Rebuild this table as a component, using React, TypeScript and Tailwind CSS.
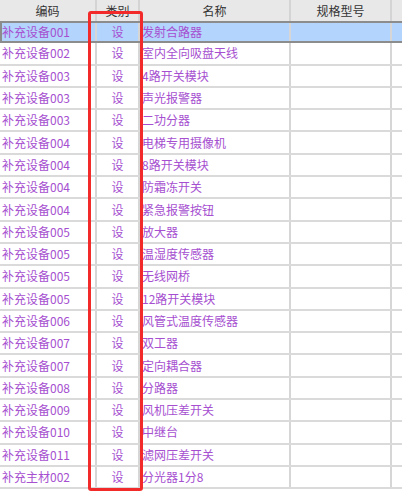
import React from 'react';

const rows: [string, string][] = [
  ['补充设备001', '发射合路器'],
  ['补充设备002', '室内全向吸盘天线'],
  ['补充设备003', '4路开关模块'],
  ['补充设备003', '声光报警器'],
  ['补充设备003', '二功分器'],
  ['补充设备004', '电梯专用摄像机'],
  ['补充设备004', '8路开关模块'],
  ['补充设备004', '防霜冻开关'],
  ['补充设备004', '紧急报警按钮'],
  ['补充设备005', '放大器'],
  ['补充设备005', '温湿度传感器'],
  ['补充设备005', '无线网桥'],
  ['补充设备005', '12路开关模块'],
  ['补充设备006', '风管式温度传感器'],
  ['补充设备007', '双工器'],
  ['补充设备007', '定向耦合器'],
  ['补充设备008', '分路器'],
  ['补充设备009', '风机压差开关'],
  ['补充设备010', '中继台'],
  ['补充设备011', '滤网压差开关'],
  ['补充主材002', '分光器1分8'],
];

const font = { fontFamily: '"Noto Sans CJK SC", "Noto Sans", sans-serif' };

const App = () => {
  return (
    <div className="relative w-[402px] h-[493px] overflow-hidden bg-white text-[12px]" style={font}>
      {/* header */}
      <div className="flex h-[21px] bg-[#e8e8e8] text-[#333]">
        <div className="w-[97px] flex items-center justify-center border-r-2 border-[#d4d4d4]">编码</div>
        <div className="w-[43px] flex items-center justify-center border-r-2 border-[#d4d4d4]">类别</div>
        <div className="w-[151px] flex items-center justify-center border-r-2 border-[#d4d4d4]">名称</div>
        <div className="w-[101px] flex items-center justify-center border-r-2 border-[#d4d4d4]">规格型号</div>
        <div className="flex-1" />
      </div>

      {rows.map(([code, name], i) => {
        const selected = i === 0;
        return (
          <div
            key={i}
            className={
              selected
                ? 'flex h-[22.3px] bg-[#b3d4fc] border-y-2 border-l-2 border-[#8c8c8c] text-[#a64fd0]'
                : 'flex h-[22.3px] border-b-2 border-[#dadada] text-[#a64fd0]'
            }
          >
            <div className={selected ? 'w-[95px] flex items-center border-r-2 border-[#d6d6d6] whitespace-nowrap overflow-hidden' : 'w-[97px] pl-[2px] flex items-center border-r-2 border-[#d6d6d6] whitespace-nowrap overflow-hidden'}>
              {code}
            </div>
            <div className="w-[43px] flex items-center justify-center border-r-2 border-[#d6d6d6]">设</div>
            <div className="w-[151px] pl-[2px] flex items-center border-r-2 border-[#d6d6d6] whitespace-nowrap overflow-hidden">
              {name}
            </div>
            <div className="w-[101px] border-r-2 border-[#d6d6d6]" />
            <div className="flex-1" />
          </div>
        );
      })}

      {/* red highlight box over the 类别 column */}
      <div className="absolute left-[88px] top-[11px] w-[55px] h-[480px] border-[3px] border-[#f22a2a] rounded-[3px] pointer-events-none" />
    </div>
  );
};

export default App;
